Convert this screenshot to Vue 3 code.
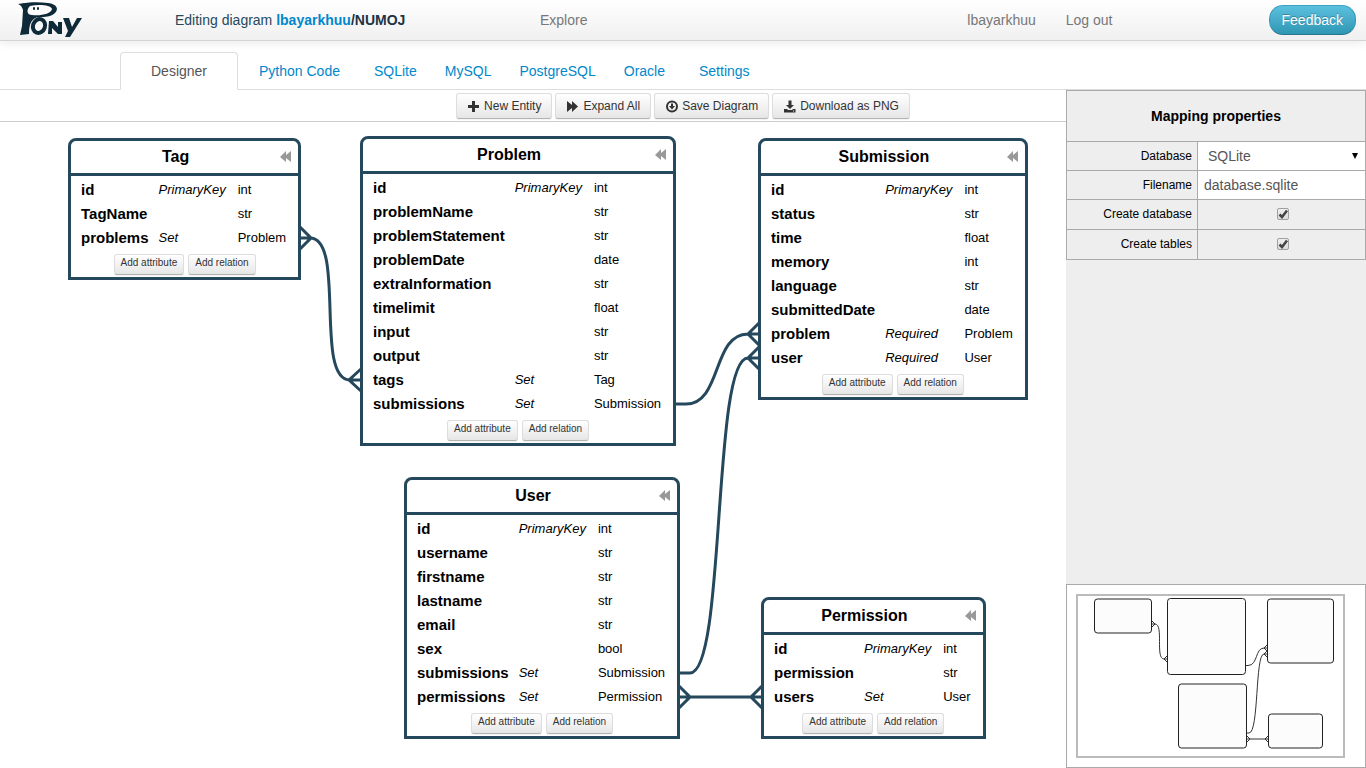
<script setup>
import { ref } from 'vue'

const tabGroups = [['Designer'], ['Python Code'], ['SQLite', 'MySQL', 'PostgreSQL', 'Oracle'], ['Settings']]

const a = (name, type, kind = '') => ({ name, kind, type })
const entities = [
  { title: 'Tag', x: 68, y: 16, attrs: [a('id', 'int', 'PrimaryKey'), a('TagName', 'str'), a('problems', 'Problem', 'Set')] },
  {
    title: 'Problem', x: 360, y: 14,
    attrs: [
      a('id', 'int', 'PrimaryKey'), a('problemName', 'str'), a('problemStatement', 'str'), a('problemDate', 'date'),
      a('extraInformation', 'str'), a('timelimit', 'float'), a('input', 'str'), a('output', 'str'),
      a('tags', 'Tag', 'Set'), a('submissions', 'Submission', 'Set')
    ]
  },
  {
    title: 'Submission', x: 758, y: 16,
    attrs: [
      a('id', 'int', 'PrimaryKey'), a('status', 'str'), a('time', 'float'), a('memory', 'int'), a('language', 'str'),
      a('submittedDate', 'date'), a('problem', 'Problem', 'Required'), a('user', 'User', 'Required')
    ]
  },
  {
    title: 'User', x: 404, y: 355,
    attrs: [
      a('id', 'int', 'PrimaryKey'), a('username', 'str'), a('firstname', 'str'), a('lastname', 'str'), a('email', 'str'),
      a('sex', 'bool'), a('submissions', 'Submission', 'Set'), a('permissions', 'Permission', 'Set')
    ]
  },
  { title: 'Permission', x: 761, y: 475, attrs: [a('id', 'int', 'PrimaryKey'), a('permission', 'str'), a('users', 'User', 'Set')] }
]

const database = ref('SQLite')
const filename = ref('database.sqlite')
const createDatabase = ref(true)
const createTables = ref(true)
</script>

<template>
  <div class="page">
    <header class="navbar">
      <a class="logo" href="#" aria-label="Pony">
        <svg width="70" height="40" viewBox="0 0 70 40">
          <path class="ink" fill-rule="evenodd" d="M3 4C14 2 24 2 33 3C42 4 44 9 40 13C36 17 30 17 24 17C17 18 14 23 14 34L5 35L7 26L8 10C7 7 6 5 3 4ZM15 6C11 10 12 15 17 15C26 16 36 14 37 9C36 5 24 4 15 6Z" />
          <rect class="ink" x="18" y="7" width="2" height="3" rx="1" />
          <rect class="ink" x="22" y="7" width="2" height="3" rx="1" />
          <ellipse class="ring" cx="24" cy="26" rx="6" ry="7" transform="rotate(20 24 26)" />
          <path class="ink" d="M33 34L34 21H38L43 27V22H47V34H43L37 28V34ZM48 18H54L57 27L62 18H67L55 37H50L53 31Z" />
        </svg>
      </a>
      <div class="crumb">Editing diagram <b><a href="#">lbayarkhuu</a>/NUMOJ</b></div>
      <a class="nav-link explore" href="#">Explore</a>
      <nav class="account">
        <a class="nav-link" href="#">lbayarkhuu</a>
        <a class="nav-link" href="#">Log out</a>
      </nav>
      <button class="feedback" type="button">Feedback</button>
    </header>

    <nav class="tabs">
      <ul v-for="(group, g) in tabGroups" :key="g" class="tab-group">
        <li v-for="tab in group" :key="tab"><a href="#" class="tab" :class="{ active: tab === 'Designer' }">{{ tab }}</a></li>
      </ul>
    </nav>

    <main class="workspace">
      <div class="toolbar">
        <button class="btn" type="button">
          <svg class="icon" viewBox="0 0 14 14"><path d="M5 2h3v4h4v3H8v4H5V9H1V6h4z" /></svg>New Entity
        </button>
        <button class="btn" type="button">
          <svg class="icon" viewBox="0 0 14 14"><path d="M1 2L6 6V2L12 7.500L6 13V9L1 13z" /></svg>Expand All
        </button>
        <button class="btn" type="button">
          <svg class="icon" viewBox="0 0 14 14"><circle cx="7" cy="7.500" r="5" fill="none" stroke="#333" stroke-width="2" /><path d="M6 4.500h2V7h2L7 10.500L4 7h2z" /></svg>Save Diagram
        </button>
        <button class="btn" type="button">
          <svg class="icon" viewBox="0 0 14 14"><path fill-rule="evenodd" d="M5.500 1.500h3V6H11L7 10L3 6h2.500zM1 10h3l1 1h4l1-1h2.500v3.500H1zM10 11.500v1h1v-1z" /></svg>Download as PNG
        </button>
      </div>

      <section class="canvas">
        <svg class="links" aria-hidden="true">
          <path d="M300 105L311 116L300 127M300 116H310C346 116 314 258 350 258H361M361 247L349 258L361 269" />
          <path d="M675 282H686C722 282 712 212 748 212H759M759 201L748 212L759 223" />
          <path d="M679 551H690C726 551 712 236 748 236H759M759 225L748 236L759 247" />
          <path d="M679 564L690 575L679 586M679 575H762M762 564L751 575L762 586" />
        </svg>
        <article v-for="e in entities" :key="e.title" class="entity" :style="{ left: e.x + 'px', top: e.y + 'px' }">
          <header class="entity-head">
            <h2>{{ e.title }}</h2>
            <button class="fold" type="button" aria-label="Collapse">
              <svg width="12" height="12" viewBox="0 0 12 12"><path d="M11 0V11L6 7V11L0 6L6 0V4z" /></svg>
            </button>
          </header>
          <table class="attrs">
            <tbody>
              <tr v-for="row in e.attrs" :key="row.name">
                <th scope="row">{{ row.name }}</th>
                <td class="kind">{{ row.kind }}</td>
                <td>{{ row.type }}</td>
              </tr>
            </tbody>
          </table>
          <div class="actions">
            <button class="btn mini" type="button">Add attribute</button>
            <button class="btn mini" type="button">Add relation</button>
          </div>
        </article>
      </section>

      <aside class="sidebar">
        <table class="props">
          <thead><tr><th colspan="2">Mapping properties</th></tr></thead>
          <tbody>
            <tr class="field">
              <td class="label"><label for="db">Database</label></td>
              <td class="value white">
                <div class="select">
                  <select id="db" v-model="database"><option>SQLite</option><option>MySQL</option><option>PostgreSQL</option><option>Oracle</option></select>
                  <svg width="6" height="6" viewBox="0 0 6 6"><path d="M0 0H6L3 6z" /></svg>
                </div>
              </td>
            </tr>
            <tr class="field">
              <td class="label"><label for="file">Filename</label></td>
              <td class="value white"><input id="file" v-model="filename" class="text" type="text"></td>
            </tr>
            <tr class="option">
              <td class="label"><label for="cdb">Create database</label></td>
              <td class="value">
                <span class="check"><input id="cdb" v-model="createDatabase" type="checkbox"><svg v-if="createDatabase" viewBox="0 0 12 12"><path d="M2.500 6.500L5 9L10 2.500" /></svg></span>
              </td>
            </tr>
            <tr class="option">
              <td class="label"><label for="ctb">Create tables</label></td>
              <td class="value">
                <span class="check"><input id="ctb" v-model="createTables" type="checkbox"><svg v-if="createTables" viewBox="0 0 12 12"><path d="M2.500 6.500L5 9L10 2.500" /></svg></span>
              </td>
            </tr>
          </tbody>
        </table>
        <div class="overview">
          <svg class="minimap" width="269" height="164" viewBox="0 0 269 164">
            <rect class="frame" x="1" y="1" width="267" height="162" />
            <rect class="box" x="18.500" y="5" width="57" height="34" rx="3" />
            <rect class="box" x="91.500" y="4.500" width="78" height="76" rx="3" />
            <rect class="box" x="191.500" y="5" width="66" height="64" rx="3" />
            <rect class="box" x="102.500" y="90" width="68" height="64" rx="3" />
            <rect class="box" x="192.500" y="120" width="54" height="34" rx="3" />
            <path class="wire" d="M76 30H79C88 30 79 65 88 65H91M76 27L79 30L76 33M91 62L88 65L91 68" />
            <path class="wire" d="M170 71.500H172C182 71.500 179 54 188 54H191M191 51L188 54L191 57" />
            <path class="wire" d="M171 139H173C183 139 179 60 188 60H191M191 57L188 60L191 63" />
            <path class="wire" d="M171 145H192M171 142L174 145L171 148M192 142L189 145L192 148" />
          </svg>
        </div>
      </aside>
    </main>
  </div>
</template>

<style>
body { background: #fff; }
</style>

<style scoped>
.page {
  min-height: 100vh;
  display: flex;
  flex-direction: column;
  font: 14px/20px "Liberation Sans", Arial, sans-serif;
  color: #333;
}
.page *, .page *::before { box-sizing: border-box; }
a { color: #0088cc; text-decoration: none; }
button, input, select { font-family: inherit; margin: 0; }

.navbar {
  display: flex;
  align-items: center;
  height: 41px;
  padding: 0 10px 0 15px;
  border-bottom: 1px solid #d4d4d4;
  background: linear-gradient(#fff, #f0f0f0);
  box-shadow: 0 1px 10px rgba(0, 0, 0, 0.1);
}
.logo { width: 160px; height: 40px; }
.ink { fill: #0e2938; }
.ring { fill: #f6f6f6; stroke: #0e2938; stroke-width: 4; }
.crumb { color: #25485c; width: 365px; }
.crumb b { color: #1c3444; }
.nav-link { color: #777; }
.account { display: flex; gap: 30px; margin-left: auto; margin-right: 156px; }
.feedback {
  height: 30px;
  padding: 0 12px;
  border: 1px solid #2f96b4;
  border-color: #3ba3c0 #2f96b4 #26768c;
  border-radius: 14px;
  background: linear-gradient(#5bc0de, #2f96b4);
  color: #fff;
  font-size: 14px;
  text-shadow: 0 -1px 0 rgba(0, 0, 0, 0.25);
}

.tabs {
  display: flex;
  gap: 6px;
  margin-top: 11px;
  padding-left: 120px;
  height: 38px;
  border-bottom: 1px solid #ddd;
}
.tab-group { display: flex; margin: 0; padding: 0; list-style: none; }
.tab-group li { margin-right: 2px; }
.tab { display: block; height: 38px; padding: 8px 12px; border: 1px solid transparent; }
.tab.active {
  padding: 8px 30px;
  color: #555;
  background: #fff;
  border-color: #ddd #ddd #fff;
  border-radius: 4px 4px 0 0;
}

.workspace {
  flex: 1;
  display: grid;
  grid-template-columns: 1fr 300px;
  grid-template-rows: 32px 1fr;
}
.toolbar {
  grid-column: 1 / 3;
  grid-row: 1;
  display: flex;
  justify-content: center;
  gap: 3px;
  padding-top: 3px;
  border-bottom: 1px solid #ccc;
}
.btn {
  display: flex;
  align-items: center;
  gap: 3px;
  height: 26px;
  padding: 0 10px;
  border: 1px solid #ddd;
  border-bottom-color: #b3b3b3;
  border-radius: 3px;
  background: linear-gradient(#fff, #e6e6e6);
  box-shadow: 0 1px 1px rgba(0, 0, 0, 0.05);
  color: #333;
  font-size: 12px;
  line-height: 20px;
  white-space: nowrap;
}
.icon { width: 14px; height: 14px; fill: #333; }
.btn.mini { height: 21px; padding: 0 6px 3px; font-size: 10px; line-height: 16px; }

.canvas { grid-column: 1; grid-row: 2; position: relative; overflow: hidden; }
.links { position: absolute; inset: 0; width: 100%; height: 100%; fill: none; stroke: #25485c; stroke-width: 3; }
.entity {
  position: absolute;
  border: 3px solid #25485c;
  border-radius: 8px 8px 0 0;
  background: #fff;
  color: #000;
}
.entity-head {
  display: flex;
  align-items: center;
  height: 35px;
  padding-right: 6px;
  border-bottom: 3px solid #25485c;
}
.entity-head h2 { flex: 1; margin: 0; font-size: 16px; line-height: 20px; text-align: center; }
.fold { display: flex; padding: 0; border: 0; background: none; }
.fold path { fill: #999; }
.attrs { border-spacing: 0; padding: 2px 5px 0; }
.attrs th, .attrs td { height: 24px; padding: 0 5px; text-align: left; white-space: nowrap; line-height: 24px; }
.attrs th { font-size: 15px; }
.attrs td { font-size: 13px; padding-right: 7px; }
.attrs .kind { font-style: italic; }
.actions { display: flex; justify-content: center; gap: 4px; height: 27px; padding-top: 4px; }

.sidebar {
  grid-column: 2;
  grid-row: 1 / 3;
  display: flex;
  flex-direction: column;
  justify-content: space-between;
  background: #eee;
  z-index: 1;
}
.props { width: 100%; border-collapse: collapse; color: #000; }
.props th, .props td { border: 1px solid #aaa; padding: 0; }
.props th { height: 51px; font-size: 14px; }
.field td { height: 29px; }
.option td { height: 30px; }
.props .label { width: 131px; padding-right: 5px; text-align: right; font-size: 12px; }
.option label { display: block; padding-bottom: 2px; }
.white { background: #fff; }
.select { display: flex; align-items: center; padding-right: 7px; }
.select select, .text {
  flex: 1;
  width: 100%;
  height: 28px;
  padding: 0 0 0 10px;
  border: 0;
  background: none;
  appearance: none;
  color: #555;
  font-size: 14px;
}
.text { display: block; padding-left: 6px; }
.check { display: grid; justify-content: center; align-items: center; grid-template-columns: 12px; padding: 0 0 2px 2px; }
.check input {
  grid-area: 1 / 1;
  appearance: none;
  width: 12px;
  height: 12px;
  border: 1px solid #a0a0a0;
  border-radius: 2px;
  background: linear-gradient(#eee, #dcdcdc);
}
.check svg { grid-area: 1 / 1; width: 12px; height: 12px; fill: none; stroke: #444; stroke-width: 2.500; pointer-events: none; }

.overview { padding: 9px; height: 184px; border: 1px solid #aaa; background: #fff; }
.minimap { display: block; }
.frame { fill: none; stroke: #bbb; stroke-width: 2; }
.box { fill: #fcfcfc; stroke: #222; stroke-width: 1; }
.wire { fill: none; stroke: #333; stroke-width: 1; }
</style>
